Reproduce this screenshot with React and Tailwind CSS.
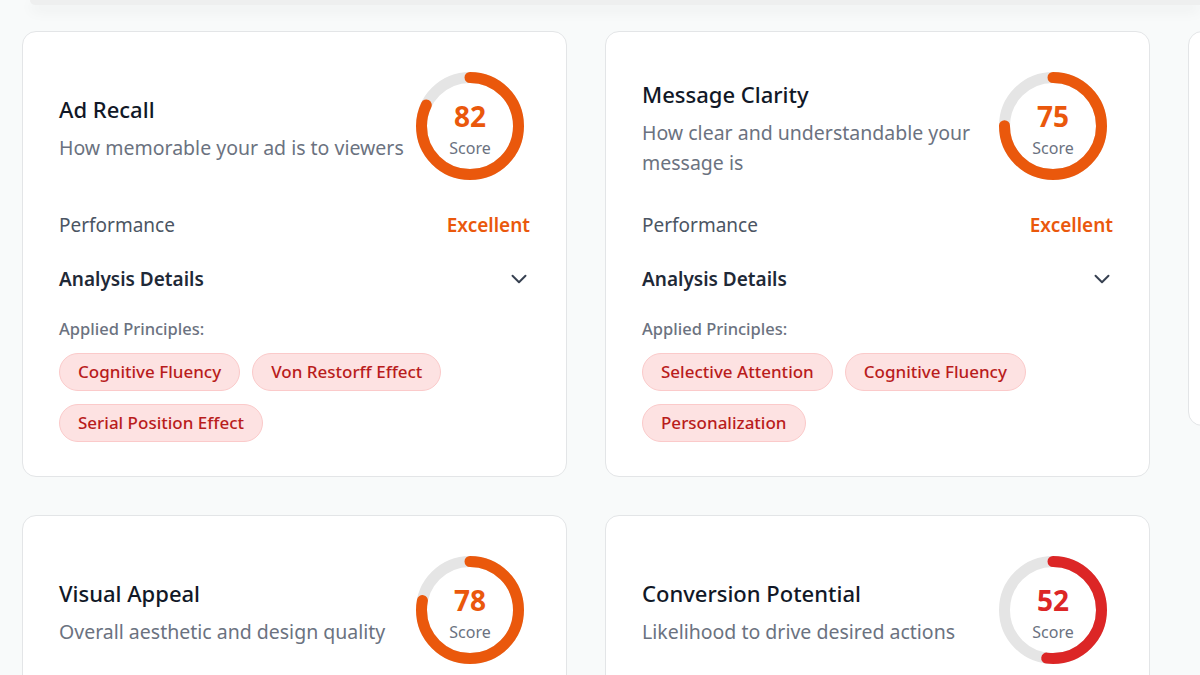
import React from 'react';
import { ChevronDown } from 'lucide-react';

const metrics = [
    {
        title: "Ad Recall",
        desc: "How memorable your ad is to viewers",
        score: 82,
        rating: "Excellent",
        principles: ["Cognitive Fluency", "Von Restorff Effect", "Serial Position Effect"]
    },
    {
        title: "Message Clarity",
        desc: "How clear and understandable your message is",
        score: 75,
        rating: "Excellent",
        principles: ["Selective Attention", "Cognitive Fluency", "Personalization"]
    },
    {
        title: "Brand Recognition",
        desc: "How well your brand stands out",
        score: 70,
        rating: "Good",
        principles: ["Mere Exposure Effect", "Cognitive Fluency"]
    },
    {
        title: "Visual Appeal",
        desc: "Overall aesthetic and design quality",
        score: 78,
        rating: "Excellent",
        principles: ["Aesthetic-Usability Effect", "Visual Hierarchy"]
    },
    {
        title: "Conversion Potential",
        desc: "Likelihood to drive desired actions",
        score: 52,
        rating: "Average",
        principles: ["Call to Action", "Loss Aversion"]
    }
];

const ScoreRing = ({ score }) => {
    const r = 48.5;
    const c = 2 * Math.PI * r;
    const low = score < 60;
    return (
        <div className="relative w-[120px] h-[120px] shrink-0">
            <svg width="120" height="120" viewBox="0 0 120 120" className="-rotate-90">
                <circle cx="60" cy="60" r={r} fill="none" stroke="#e5e5e5" strokeWidth="11" />
                <circle
                    cx="60" cy="60" r={r} fill="none"
                    stroke={low ? "#dc2626" : "#ea580c"}
                    strokeWidth="11" strokeLinecap="round"
                    strokeDasharray={c}
                    strokeDashoffset={c * (1 - score / 100)}
                />
            </svg>
            <div className="absolute inset-0 flex flex-col items-center justify-center pt-[7px]">
                <span className={`text-[28px] leading-[34px] font-bold ${low ? "text-[#dc2626]" : "text-[#ea580c]"}`}>{score}</span>
                <span className="text-[16px] leading-[24px] text-[#6b7280] mt-[3px]">Score</span>
            </div>
        </div>
    );
};

const MetricCard = ({ item }) => (
    <div className="bg-white rounded-[14px] border border-[#e3e5e7] px-[36px] pt-[34px] pb-[34px]">
        <div className="flex items-center">
            <div className="flex-1 min-w-0 pt-[4px]">
                <h3 className="text-[22px] leading-[32px] font-medium text-[#111827]">{item.title}</h3>
                <p className="text-[19.5px] leading-[30px] text-[#6b7280] mt-[8px] pr-[4px]">{item.desc}</p>
            </div>
            <ScoreRing score={item.score} />
        </div>

        <div className="flex items-center justify-between mt-[24px] text-[19px] leading-[30px]">
            <span className="text-[#4b5563]">Performance</span>
            <span className={`font-semibold ${item.score < 60 ? "text-[#dc2626]" : "text-[#ea580c]"}`}>{item.rating}</span>
        </div>

        <div className="flex items-center justify-between mt-[24px]">
            <span className="text-[19px] leading-[30px] font-semibold text-[#1f2937]">Analysis Details</span>
            <ChevronDown size={26} strokeWidth={1.8} className="text-[#374151] -mr-[2px]" />
        </div>

        <p className="text-[16.5px] leading-[24px] font-medium text-[#6b7280] mt-[23px]">Applied Principles:</p>
        <div className="flex flex-wrap gap-x-[12px] gap-y-[13px] mt-[12px]">
            {item.principles.map((p) => (
                <span key={p} className="h-[38px] px-[18px] flex items-center rounded-full bg-[#fde2e2] border border-[#fbcaca] text-[17px] font-medium text-[#b91c1c]">
                    {p}
                </span>
            ))}
        </div>
    </div>
);

export default function App() {
    return (
        <div className="w-[1200px] h-[675px] overflow-hidden bg-[#f8fafa]" style={{ fontFamily: '"Noto Sans", "Open Sans", sans-serif' }}>
            <div className="h-[5px] ml-[30px] rounded-bl-[14px] bg-[#eeefef] shadow-[0_5px_14px_rgba(0,0,0,0.08)]" />
            <div className="grid grid-cols-[repeat(3,545px)] gap-[38px] items-start pl-[22px] pt-[26px]">
                {metrics.map((item) => (
                    <MetricCard key={item.title} item={item} />
                ))}
            </div>
        </div>
    );
}
